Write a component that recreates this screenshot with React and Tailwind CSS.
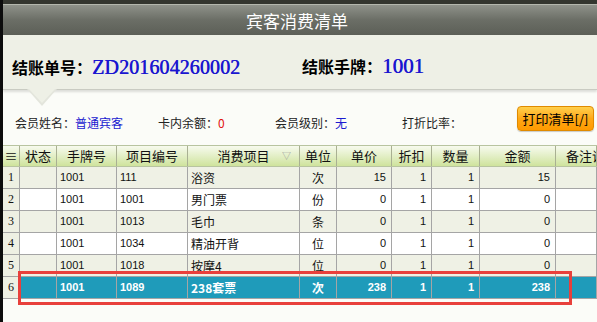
import React from "react";

const cols = [
  { w: "w-[17px]", align: "text-center" },
  { w: "w-[37px]", align: "text-center" },
  { w: "w-[60px]", align: "text-left" },
  { w: "w-[71px]", align: "text-left" },
  { w: "w-[112px]", align: "text-left" },
  { w: "w-[37px]", align: "text-center" },
  { w: "w-[55px]", align: "text-right" },
  { w: "w-[40px]", align: "text-right" },
  { w: "w-[48px]", align: "text-right" },
  { w: "w-[76px]", align: "text-right" },
  { w: "flex-1", align: "text-left" },
];

const headers = ["≡", "状态", "手牌号", "项目编号", "消费项目", "单位", "单价", "折扣", "数量", "金额", "备注说明"];

const rows = [
  ["1", "", "1001", "111", "浴资", "次", "15", "1", "1", "15", ""],
  ["2", "", "1001", "1001", "男门票", "份", "0", "1", "1", "0", ""],
  ["3", "", "1001", "1013", "毛巾", "条", "0", "1", "1", "0", ""],
  ["4", "", "1001", "1034", "精油开背", "位", "0", "1", "1", "0", ""],
  ["5", "", "1001", "1018", "按摩4", "位", "0", "1", "1", "0", ""],
  ["6", "", "1001", "1089", "238套票", "次", "238", "1", "1", "238", ""],
];

const font = { fontFamily: '"Liberation Sans", "Noto Sans CJK SC", sans-serif' };
const cjk = { fontFamily: '"Noto Sans CJK SC", "Liberation Sans", sans-serif' };

export default function App() {
  return (
    <div className="relative flex h-[322px] w-[597px] overflow-hidden bg-[#fbfcf8]" style={font}>
      <div className="w-[3px] shrink-0 bg-[#0c0c0c]" />
      <div className="flex min-w-0 flex-1 flex-col">
        <div className="h-[4px] bg-[#34362f]" />
        <div className="flex h-[31px] items-center justify-center border-t border-[#b4b7ad] bg-gradient-to-b from-[#8f928a] via-[#6b6e66] to-[#5c5f57]">
          <span className="ml-[-6px] text-[17px] leading-none text-white" style={cjk}>宾客消费清单</span>
        </div>
        <div className="flex h-[55px] items-center border-b border-[#c9cbc2] bg-[#eef0e6] pl-[9px] pt-[10px] shadow-[0_2px_2px_rgba(0,0,0,0.12)]">
          <div className="flex w-[290px] items-baseline">
            <span className="text-[16px] font-bold text-black" style={cjk}>结账单号：</span>
            <span className="text-[20px] text-[#1a16d0] [text-shadow:0.5px_0_0_#1a16d0]" style={{ fontFamily: '"Liberation Serif", serif', letterSpacing: "0.1px" }}>ZD201604260002</span>
          </div>
          <div className="flex items-baseline">
            <span className="text-[16px] font-bold text-black" style={cjk}>结账手牌：</span>
            <span className="text-[21px] text-[#1a16d0] [text-shadow:0.5px_0_0_#1a16d0]" style={{ fontFamily: '"Liberation Serif", serif' }}>1001</span>
          </div>
        </div>
        <div className="flex h-[55px] items-center pl-[12px] pt-[10px] text-[12px]" style={cjk}>
          <div className="w-[143px]">
            <span className="text-[#222]">会员姓名：</span>
            <span className="text-[#1a1ad0]">普通宾客</span>
          </div>
          <div className="w-[117px]">
            <span className="text-[#222]">卡内余额：</span>
            <span className="text-[#e01010]">0</span>
          </div>
          <div className="w-[127px]">
            <span className="text-[#222]">会员级别：</span>
            <span className="text-[#1a1ad0]">无</span>
          </div>
          <div className="w-[115px]">
            <span className="text-[#222]">打折比率：</span>
          </div>
          <button className="mt-[-8px] flex h-[25px] w-[77px] items-center justify-center rounded-[4px] border border-[#e08a00] bg-gradient-to-b from-[#ffd04a] via-[#ffa814] to-[#ff9a00] text-[13px] text-black shadow-[0_1px_1px_rgba(0,0,0,0.2)]">
            打印清单[/]
          </button>
        </div>
        <div className="flex flex-col">
          <div className="flex h-[22px] border-y border-[#b8c4a0] bg-gradient-to-b from-[#f7faee] to-[#cfe39c] text-[13px] text-[#111]" style={cjk}>
            {headers.map((h, i) => (
              <div key={i} className={`${cols[i].w} relative flex shrink-0 items-center justify-center overflow-hidden whitespace-nowrap border-r border-[#a9b092] ${i === 10 ? "justify-start pl-[10px]" : ""}`}>
                {h}
                {i === 4 && <span className="absolute right-[8px] top-[3px] text-[9px] text-[#999]">▽</span>}
              </div>
            ))}
          </div>
          {rows.map((r, ri) => {
            const sel = ri === 5;
            const bg = sel ? "bg-[#1f9bba]" : ri % 2 === 0 ? "bg-[#eff1e5]" : "bg-white";
            return (
              <div key={ri} className="flex h-[22px] border-b border-[#a5a5a5]">
                {r.map((c, ci) => {
                  const isCjk = ci === 4 || ci === 5;
                  const cellBg = ci === 0 ? "bg-[#eef0e3]" : bg;
                  const color = sel && ci > 0 ? "text-white font-bold" : "text-[#111]";
                  const pad = cols[ci].align === "text-right" ? "pr-[5px]" : cols[ci].align === "text-left" ? "pl-[3px]" : "";
                  return (
                    <div
                      key={ci}
                      className={`${cols[ci].w} ${cellBg} ${color} ${cols[ci].align} ${pad} shrink-0 overflow-hidden whitespace-nowrap border-r border-[#a5a5a5] ${isCjk ? "text-[12px] leading-[21px]" : "text-[11px] leading-[21px]"}`}
                      style={isCjk ? cjk : ci === 0 ? { fontFamily: '"Liberation Serif", serif', fontSize: "12px" } : font}
                    >
                      {c}
                    </div>
                  );
                })}
              </div>
            );
          })}
        </div>
      </div>
      <svg className="absolute left-[27px] top-[89px]" width="30" height="18" viewBox="0 0 30 18">
        <polygon points="0,0 30,0 15,17" fill="#e3e5dc" />
        <polygon points="2,0 28,0 15,14" fill="#eef0e6" />
      </svg>
      <div className="pointer-events-none absolute left-[18px] top-[271px] h-[34px] w-[554px] border-[3px] border-[#e8403c]" />
    </div>
  );
}
